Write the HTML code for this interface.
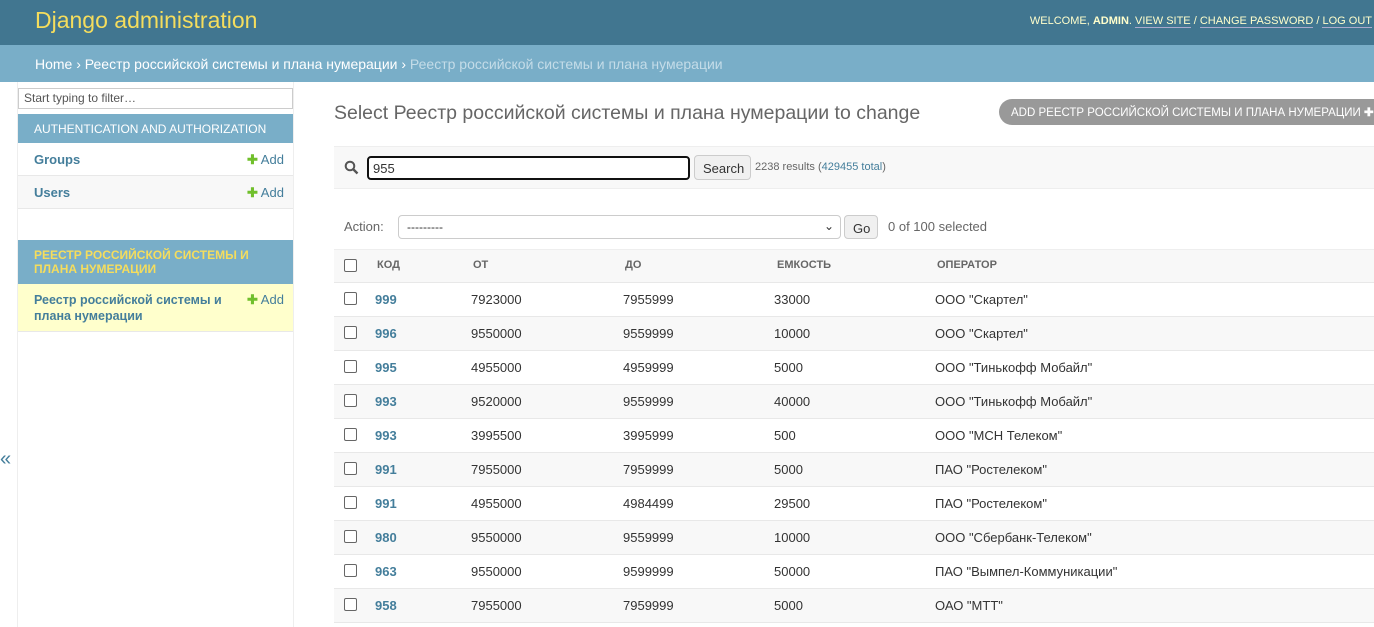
<!DOCTYPE html>
<html><head><meta charset="utf-8"><style>
*{box-sizing:border-box;margin:0;padding:0}
body{width:1374px;height:627px;overflow:hidden;font-family:"Liberation Sans",sans-serif;background:#fff;color:#333;position:relative;font-size:13px}
.a{position:absolute;white-space:nowrap}
#hdr{left:0;top:0;width:1374px;height:45px;background:#417690}
#bc{left:0;top:45px;width:1374px;height:37px;background:#79aec8;color:#fff;font-size:14px;padding:11px 35px}
a{color:#447e9b;text-decoration:none}
.row{position:absolute;left:334px;width:1040px;height:34px;border-bottom:1px solid #e8e8e8}
.cb{position:absolute;left:10px;top:9px;width:13px;height:13px;border:1px solid #666;border-radius:2px;background:#fff}
.c{position:absolute;top:9px;font-size:13px}
</style></head><body>
<div class="a" id="hdr"></div>
<div class="a" style="left:35px;top:7px;font-size:23px;color:#f5dd5d">Django administration</div>
<div class="a" style="right:2px;top:15px;font-size:11px;color:#ffc;letter-spacing:0">WELCOME, <b style="color:#ffc">ADMIN</b>. <span style="border-bottom:1px solid #aac">VIEW SITE</span> / <span style="border-bottom:1px solid #aac">CHANGE PASSWORD</span> / <span style="border-bottom:1px solid #aac">LOG OUT</span></div>
<div class="a" id="bc">Home › Реестр российской системы и плана нумерации › <span style="color:#c4dce8">Реестр российской системы и плана нумерации</span></div>

<div class="a" style="left:17px;top:82px;width:277px;height:545px;border-right:1px solid #eee;border-left:1px solid #eee"></div>
<div class="a" style="left:18px;top:88px;width:275px;height:21px;border:1px solid #ccc;font-size:12px;color:#555;padding:2px 5px">Start typing to filter…</div>
<div class="a" style="left:18px;top:114px;width:275px;height:29px;background:#79aec8;color:#fff;font-size:12px;padding:8px 16px">AUTHENTICATION AND AUTHORIZATION</div>
<div class="a" style="left:18px;top:143px;width:275px;height:33px;border-bottom:1px solid #e8e8e8;padding:9px 16px;font-weight:bold;color:#447e9b">Groups</div>
<div class="a" style="left:247px;top:152px;color:#447e9b"><span style="color:#70bf2b;font-weight:bold">✚</span> Add</div>
<div class="a" style="left:18px;top:176px;width:275px;height:33px;background:#f8f8f8;border-bottom:1px solid #e8e8e8;padding:9px 16px;font-weight:bold;color:#447e9b">Users</div>
<div class="a" style="left:247px;top:185px;color:#447e9b"><span style="color:#70bf2b;font-weight:bold">✚</span> Add</div>
<div class="a" style="left:18px;top:240px;width:275px;height:44px;background:#79aec8;color:#f5dd5d;font-size:12px;font-weight:bold;padding:8px 16px;white-space:normal;line-height:14px">РЕЕСТР РОССИЙСКОЙ СИСТЕМЫ И ПЛАНА НУМЕРАЦИИ</div>
<div class="a" style="left:18px;top:284px;width:275px;height:48px;background:#ffc;border-bottom:1px solid #e8e8e8;padding:8px 16px;font-weight:bold;color:#447e9b;font-size:12.5px;white-space:normal;line-height:16px;padding-right:70px">Реестр российской системы и плана нумерации</div>
<div class="a" style="left:247px;top:292px;color:#447e9b"><span style="color:#70bf2b;font-weight:bold">✚</span> Add</div>
<div class="a" style="left:0;top:448px;font-size:20px;color:#447e9b">«</div>

<div class="a" style="left:334px;top:102px;font-size:19.5px;color:#666;font-weight:300">Select Реестр российской системы и плана нумерации to change</div>
<div class="a" style="left:999px;top:99px;width:390px;height:26px;border-radius:13px;background:#999;color:#fff;font-size:11.5px;padding:6px 12px">ADD РЕЕСТР РОССИЙСКОЙ СИСТЕМЫ И ПЛАНА НУМЕРАЦИИ <b>✚</b></div>

<div class="a" style="left:334px;top:146px;width:1040px;height:43px;background:#f8f8f8;border-top:1px solid #eee;border-bottom:1px solid #eee"></div>
<svg class="a" style="left:344px;top:160px" width="15" height="15" viewBox="0 0 15 15"><circle cx="6" cy="6" r="4.3" fill="none" stroke="#555" stroke-width="2"/><path d="M9 9l4.5 4.5" stroke="#555" stroke-width="2.4"/></svg>
<div class="a" style="left:367px;top:156px;width:323px;height:24px;border:2px solid #111;border-radius:4px;background:#fff;padding:3px 4px;font-size:13px">955</div>
<div class="a" style="left:694px;top:155px;width:57px;height:25px;border:1px solid #ccc;border-radius:4px;background:#f0f0f0;padding:5px 8px;font-size:13px">Search</div>
<div class="a" style="left:755px;top:161px;font-size:11px;color:#666">2238 results (<a>429455 total</a>)</div>

<div class="a" style="left:344px;top:219px;color:#666">Action:</div>
<div class="a" style="left:398px;top:215px;width:443px;height:24px;border:1px solid #ccc;border-radius:4px;padding:4px 8px;font-size:12px">---------<span style="position:absolute;right:6px;top:3px">⌄</span></div>
<div class="a" style="left:844px;top:215px;width:34px;height:24px;border:1px solid #ccc;border-radius:4px;background:#f0f0f0;padding:5px 8px">Go</div>
<div class="a" style="left:888px;top:219px;color:#666">0 of 100 selected</div>

<div class="row" style="top:249px;height:34px;background:#f8f8f8;border-top:1px solid #eee"><span class="cb"></span>
<span class="c" style="left:43px;font-size:11px;font-weight:bold;color:#666">КОД</span><span class="c" style="left:139px;font-size:11px;font-weight:bold;color:#666">ОТ</span><span class="c" style="left:291px;font-size:11px;font-weight:bold;color:#666">ДО</span><span class="c" style="left:443px;font-size:11px;font-weight:bold;color:#666">ЕМКОСТЬ</span><span class="c" style="left:603px;font-size:11px;font-weight:bold;color:#666">ОПЕРАТОР</span></div>

<div class="row" style="top:283px"><span class="cb"></span><b class="c" style="left:41px;color:#447e9b">999</b><span class="c" style="left:137px">7923000</span><span class="c" style="left:289px">7955999</span><span class="c" style="left:440px">33000</span><span class="c" style="left:601px">ООО "Скартел"</span></div>
<div class="row" style="top:317px;background:#f8f8f8"><span class="cb"></span><b class="c" style="left:41px;color:#447e9b">996</b><span class="c" style="left:137px">9550000</span><span class="c" style="left:289px">9559999</span><span class="c" style="left:440px">10000</span><span class="c" style="left:601px">ООО "Скартел"</span></div>
<div class="row" style="top:351px"><span class="cb"></span><b class="c" style="left:41px;color:#447e9b">995</b><span class="c" style="left:137px">4955000</span><span class="c" style="left:289px">4959999</span><span class="c" style="left:440px">5000</span><span class="c" style="left:601px">ООО "Тинькофф Мобайл"</span></div>
<div class="row" style="top:385px;background:#f8f8f8"><span class="cb"></span><b class="c" style="left:41px;color:#447e9b">993</b><span class="c" style="left:137px">9520000</span><span class="c" style="left:289px">9559999</span><span class="c" style="left:440px">40000</span><span class="c" style="left:601px">ООО "Тинькофф Мобайл"</span></div>
<div class="row" style="top:419px"><span class="cb"></span><b class="c" style="left:41px;color:#447e9b">993</b><span class="c" style="left:137px">3995500</span><span class="c" style="left:289px">3995999</span><span class="c" style="left:440px">500</span><span class="c" style="left:601px">ООО "МСН Телеком"</span></div>
<div class="row" style="top:453px;background:#f8f8f8"><span class="cb"></span><b class="c" style="left:41px;color:#447e9b">991</b><span class="c" style="left:137px">7955000</span><span class="c" style="left:289px">7959999</span><span class="c" style="left:440px">5000</span><span class="c" style="left:601px">ПАО "Ростелеком"</span></div>
<div class="row" style="top:487px"><span class="cb"></span><b class="c" style="left:41px;color:#447e9b">991</b><span class="c" style="left:137px">4955000</span><span class="c" style="left:289px">4984499</span><span class="c" style="left:440px">29500</span><span class="c" style="left:601px">ПАО "Ростелеком"</span></div>
<div class="row" style="top:521px;background:#f8f8f8"><span class="cb"></span><b class="c" style="left:41px;color:#447e9b">980</b><span class="c" style="left:137px">9550000</span><span class="c" style="left:289px">9559999</span><span class="c" style="left:440px">10000</span><span class="c" style="left:601px">ООО "Сбербанк-Телеком"</span></div>
<div class="row" style="top:555px"><span class="cb"></span><b class="c" style="left:41px;color:#447e9b">963</b><span class="c" style="left:137px">9550000</span><span class="c" style="left:289px">9599999</span><span class="c" style="left:440px">50000</span><span class="c" style="left:601px">ПАО "Вымпел-Коммуникации"</span></div>
<div class="row" style="top:589px;background:#f8f8f8"><span class="cb"></span><b class="c" style="left:41px;color:#447e9b">958</b><span class="c" style="left:137px">7955000</span><span class="c" style="left:289px">7959999</span><span class="c" style="left:440px">5000</span><span class="c" style="left:601px">ОАО "МТТ"</span></div>
</body></html>
